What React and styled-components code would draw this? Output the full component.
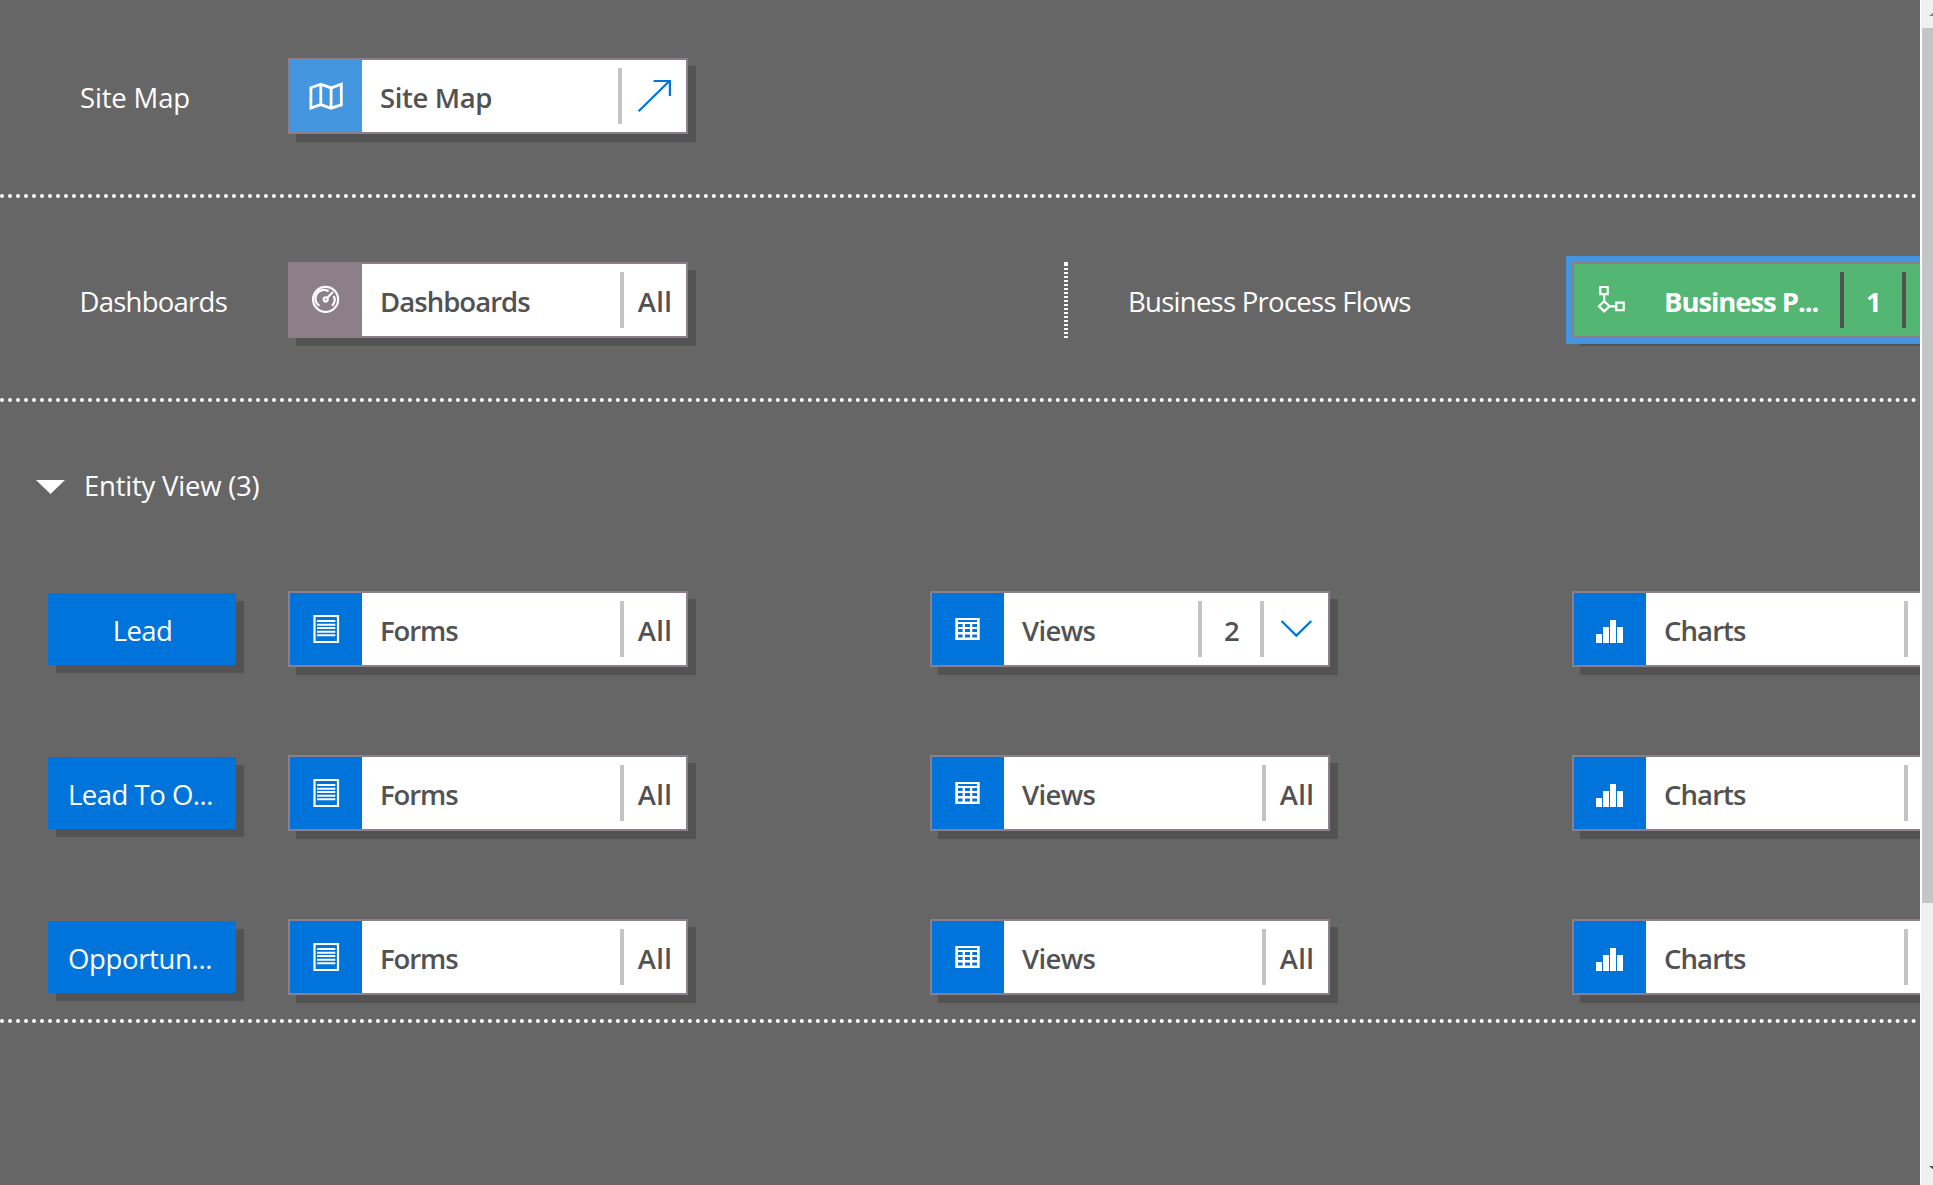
import React from "react";
import styled, { createGlobalStyle, css } from "styled-components";

const GlobalStyle = createGlobalStyle`
  * { box-sizing: border-box; }
  html, body { margin: 0; padding: 0; overflow: hidden; }
  body { background: #666666; font-family: "Open Sans", "Noto Sans", sans-serif; }
`;

const Page = styled.div`
  display: flex;
  width: 1933px;
  height: 1185px;
  overflow: hidden;
  background: #666666;
  color: #ffffff;
  font-size: 27.5px;
  line-height: 36px;
`;

const Canvas = styled.main`
  flex: 0 0 1920px;
  overflow: hidden;
`;

const Section = styled.section`
  width: 1918px;
  padding: ${(p) => p.$pad};
  border-bottom: 4px dotted #ffffff;
`;

const Row = styled.div`
  display: flex;
  align-items: center;
  height: 76px;
`;

const RowLabel = styled.div`
  flex: 0 0 ${(p) => p.$width}px;
  padding-left: ${(p) => p.$indent}px;
  padding-top: 4px;
  white-space: nowrap;
  letter-spacing: ${(p) => p.$track}px;
`;

const VerticalDots = styled.div`
  flex: 0 0 4px;
  height: 76px;
  margin-left: 376px;
  border-top: 2px solid #ffffff;
  background: repeating-linear-gradient(to bottom, #ffffff 0 2px, transparent 2px 4px);
`;

const CardBox = styled.div`
  display: flex;
  flex: 0 0 400px;
  height: 76px;
  border: 2px solid #8c7f89;
  background: #ffffff;
  color: #525252;
  font-weight: 600;
  box-shadow: 8px 8px 0 #535353;
  ${(p) =>
    p.$active &&
    css`
      background: #53b673;
      color: #ffffff;
      font-weight: 700;
      box-shadow: 0 0 0 6px #4496e0, 8px 8px 0 #535353;
    `}
`;

const IconTile = styled.div`
  flex: 0 0 72px;
  height: 72px;
  background: ${(p) => p.$color};

  svg {
    display: block;
  }
`;

const CardLabel = styled.div`
  flex: 1 1 0;
  min-width: 0;
  padding: 20px 0 0 18px;
  white-space: nowrap;
  letter-spacing: ${(p) => p.$track}px;
`;

const CardCell = styled.div`
  display: flex;
  flex: 0 0 ${(p) => p.$width}px;
  justify-content: center;
  padding-top: ${(p) => (p.$glyph ? 0 : 20)}px;
  padding-left: ${(p) => p.$shift || 0}px;
  letter-spacing: 0.3px;
`;

const Divider = styled.div`
  flex: 0 0 4px;
  height: 56px;
  margin-top: 8px;
  background: ${(p) => (p.$dark ? "#525252" : "#c4c4c6")};
`;

const EntityHeading = styled.div`
  display: flex;
  align-items: center;
  gap: 19px;
  height: 36px;
  padding-left: 36px;
  letter-spacing: -0.22px;

  svg {
    margin-top: 2px;
  }
`;

const Rows = styled.div`
  display: flex;
  flex-direction: column;
  gap: 88px;
  margin-top: 87px;
`;

const EntityRow = styled(Row)`
  padding-left: 48px;
`;

const EntityButton = styled.div`
  flex: 0 0 188px;
  height: 72px;
  margin-right: 52px;
  padding: 20px 0 0 ${(p) => p.$indent}px;
  background: #0074db;
  box-shadow: 8px 8px 0 #535353;
  white-space: nowrap;
  letter-spacing: ${(p) => p.$track}px;
`;

const CardStrip = styled.div`
  display: flex;
  gap: 242px;
`;

const ScrollTrack = styled.div`
  flex: 1 0 13px;
  display: flex;
  flex-direction: column;
  overflow: hidden;
  padding: 12px 0 15px;
  border-left: 1px solid #ffffff;
  background: #f0f0f0;
`;

const ScrollThumb = styled.div`
  height: 875px;
  margin: 12px 0 auto;
  border-left: 1px solid #ffffff;
  background: #c4c5c7;
`;

const ScrollArrow = styled.svg`
  display: block;
  flex: none;
  margin-left: 8px;
`;

const Glyph = ({ children, width = 72 }) => (
  <svg width={width} height="72" viewBox={`0 0 ${width} 72`} fill="none" stroke="#ffffff" strokeWidth="2.2">
    {children}
  </svg>
);

const MapIcon = () => (
  <Glyph>
    <path strokeWidth="2.8" d="M20.9 27.7 30.8 24.2l10.3 3.7L51.3 24.2v20.7L41.1 48.2l-10.3-3.6-9.9 3.4zM30.8 24.2v20.4M41.1 27.9v20.3" />
  </Glyph>
);

const GaugeIcon = () => (
  <Glyph>
    <circle cx="35.6" cy="35.4" r="12.5" />
    <path d="M29.4 41.8a8.6 8.6 0 0 1 9.2-14.6M43.8 32a8.8 8.8 0 0 1-1.8 9.8M37 34l6-6" />
    <circle cx="35.7" cy="35.4" r="2" />
  </Glyph>
);

const FlowIcon = () => (
  <Glyph>
    <path d="M26.3 23h7.4v7.2h-7.4zM30.2 30v7M30.2 37.2l5.2 5.1-5.2 5.1-5.2-5.1zM35.4 42.3h6.5M42.3 38.7h7.4v7.4h-7.4z" />
  </Glyph>
);

const FormIcon = () => (
  <Glyph>
    <path d="M24.5 23H48v26H24.5z" />
    <path strokeWidth="2" d="M27 28h18.3M27 31.7h18.3M27 35h18.3M27 38.8h18.3M27 42.2h18.3" />
  </Glyph>
);

const GridIcon = () => (
  <Glyph>
    <path fill="#ffffff" stroke="none" d="M23.3 25h24.4v22H23.3z" />
    <path
      fill="#0074db"
      stroke="none"
      d="M26 27h19v2H26zM26 31h4.6v3H26zM33 31h5v3h-5zM40.3 31H45v3h-4.7zM26 36h4.6v3H26zM33 36h5v3h-5zM40.3 36H45v3h-4.7zM26 41.4h4.6v3H26zM33 41.4h5v3h-5zM40.3 41.4H45v3h-4.7z"
    />
  </Glyph>
);

const ChartIcon = () => (
  <Glyph>
    <path fill="#ffffff" stroke="none" d="M22 41h6v9h-6zM29 34h6v16h-6zM36 27h6v23h-6zM43 34h6v16h-6z" />
  </Glyph>
);

const OpenArrow = () => (
  <Glyph width={64}>
    <path stroke="#0074db" d="M16.6 51.2 47.4 21M31.6 21h16.3v15" />
  </Glyph>
);

const Chevron = () => (
  <Glyph width={64}>
    <path stroke="#0074db" d="M17.5 28 32.3 42.6 47.3 28" />
  </Glyph>
);

function Card({ icon, color, label, track, count, action, active, clipped }) {
  return (
    <CardBox $active={active}>
      <IconTile $color={color}>{icon}</IconTile>
      <CardLabel $track={track}>{label}</CardLabel>
      {(count || clipped) && (
        <>
          <Divider $dark={active} />
          <CardCell $width={action ? 58 : 62} $shift={action ? 2 : 0}>{count}</CardCell>
        </>
      )}
      {action && (
        <>
          <Divider $dark={active} />
          <CardCell $glyph $width={64}>{action}</CardCell>
        </>
      )}
    </CardBox>
  );
}

const entities = [
  { name: "Lead", track: -0.6, indent: 64.7, views: "2", expandable: true },
  { name: "Lead To O...", track: -0.5, indent: 20 },
  { name: "Opportun...", track: -0.35, indent: 20 },
];

export default function App() {
  return (
    <>
      <GlobalStyle />
      <Page>
        <Canvas>
          <Section $pad="58px 0 60px">
            <Row>
              <RowLabel $width={288} $indent={80} $track={-0.16}>Site Map</RowLabel>
              <Card icon={<MapIcon />} color="#4496e0" label="Site Map" track={-0.37} action={<OpenArrow />} />
            </Row>
          </Section>

          <Section $pad="64px 0 60px">
            <Row>
              <RowLabel $width={288} $indent={79.5} $track={-0.75}>Dashboards</RowLabel>
              <Card icon={<GaugeIcon />} color="#8c7f89" label="Dashboards" track={-0.95} count="All" />
              <VerticalDots />
              <RowLabel $width={504} $indent={60} $track={-0.73}>Business Process Flows</RowLabel>
              <Card
                active
                icon={<FlowIcon />}
                color="#53b673"
                label="Business P..."
                track={-1.07}
                count="1"
                action={<Chevron />}
              />
            </Row>
          </Section>

          <Section $pad="66px 0 24px">
            <EntityHeading>
              <svg width="29" height="16" viewBox="0 0 29 16">
                <path fill="#ffffff" d="M0 1h29L14.5 15z" />
              </svg>
              Entity View (3)
            </EntityHeading>
            <Rows>
              {entities.map((e) => (
                <EntityRow key={e.name}>
                  <EntityButton $track={e.track} $indent={e.indent}>{e.name}</EntityButton>
                  <CardStrip>
                    <Card icon={<FormIcon />} color="#0074db" label="Forms" track={-1.1} count="All" />
                    <Card
                      icon={<GridIcon />}
                      color="#0074db"
                      label="Views"
                      track={-0.65}
                      count={e.views || "All"}
                      action={e.expandable && <Chevron />}
                    />
                    <Card icon={<ChartIcon />} color="#0074db" label="Charts" track={-0.9} clipped />
                  </CardStrip>
                </EntityRow>
              ))}
            </Rows>
          </Section>
        </Canvas>

        <ScrollTrack>
          <ScrollArrow width="5" height="4" viewBox="0 0 5 4">
            <path fill="#8c7f89" d="M0 4 5 0v4z" />
          </ScrollArrow>
          <ScrollThumb />
          <ScrollArrow width="5" height="4" viewBox="0 0 5 4">
            <path fill="#525252" d="M0 0h5v4z" />
          </ScrollArrow>
        </ScrollTrack>
      </Page>
    </>
  );
}
